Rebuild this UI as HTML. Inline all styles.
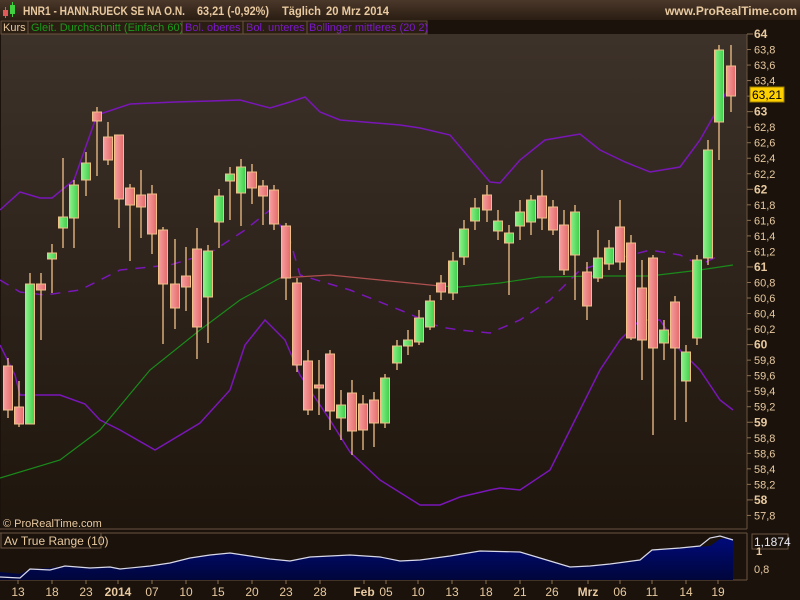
<!DOCTYPE html><html><head><meta charset="utf-8"><style>
*{margin:0;padding:0}body{width:800px;height:600px;background:#1a120b;overflow:hidden;font-family:"Liberation Sans",sans-serif;position:relative}
</style></head><body>
<svg width="800" height="600" style="position:absolute;left:0;top:0" font-family="Liberation Sans, sans-serif">
<defs>
<linearGradient id="bg" x1="0" y1="0" x2="0" y2="1"><stop offset="0" stop-color="#3d322a"/><stop offset="1" stop-color="#1e150d"/></linearGradient>
<linearGradient id="hd" x1="0" y1="0" x2="0" y2="1"><stop offset="0" stop-color="#4a382a"/><stop offset="1" stop-color="#2a1d12"/></linearGradient>
<linearGradient id="gr" x1="0" y1="0" x2="1" y2="0"><stop offset="0" stop-color="#8ff08a"/><stop offset="1" stop-color="#3ecf4a"/></linearGradient>
<linearGradient id="rd" x1="0" y1="0" x2="1" y2="0"><stop offset="0" stop-color="#f6a0a0"/><stop offset="1" stop-color="#e56a6a"/></linearGradient>
<linearGradient id="at" x1="0" y1="0" x2="0" y2="1"><stop offset="0" stop-color="#000a7a"/><stop offset="1" stop-color="#00063a"/></linearGradient>
</defs>
<rect width="800" height="20" fill="url(#hd)"/>
<rect x="0" y="20" width="800" height="580" fill="#1a120b"/>
<rect x="1" y="34" width="746" height="494" fill="url(#bg)"/>
<line x1="747" y1="34" x2="747" y2="529" stroke="#6a5440"/>
<line x1="0" y1="529" x2="747" y2="529" stroke="#6a5440"/>
<line x1="0" y1="533" x2="747" y2="533" stroke="#6a5440"/>
<line x1="747" y1="533" x2="747" y2="580" stroke="#6a5440"/>
<line x1="0" y1="580" x2="747" y2="580" stroke="#6a5440"/>
<rect x="3" y="10" width="5" height="6" fill="#e05a5a"/><line x1="5.5" y1="7" x2="5.5" y2="18" stroke="#e05a5a"/>
<rect x="10" y="5" width="5" height="9" fill="#40d040"/><line x1="12.5" y1="2" x2="12.5" y2="17" stroke="#40d040"/>
<g font-size="12" font-weight="bold" fill="#e8c9a0">
<text x="23" y="15" textLength="162" lengthAdjust="spacingAndGlyphs">HNR1 - HANN.RUECK SE NA O.N.</text>
<text x="197" y="15" textLength="72" lengthAdjust="spacingAndGlyphs">63,21 (-0,92%)</text>
<text x="282" y="15" textLength="39" lengthAdjust="spacingAndGlyphs">Täglich</text>
<text x="326" y="15" textLength="63" lengthAdjust="spacingAndGlyphs">20 Mrz 2014</text>
<text x="797" y="15" text-anchor="end">www.ProRealTime.com</text>
</g>
<g font-size="11">
<rect x="1" y="21" width="27" height="13" fill="#2a1d12" stroke="#6a5440"/><text x="3" y="31" fill="#e8c9a0">Kurs</text>
<rect x="28" y="21" width="154" height="13" fill="#2a1d12" stroke="#6a5440"/><text x="31" y="31" fill="#1a9a1a">Gleit. Durchschnitt (Einfach 60)</text>
<rect x="182" y="21" width="61" height="13" fill="#2a1d12" stroke="#6a5440"/><text x="185" y="31" fill="#7a1ac8">Bol. oberes</text>
<rect x="243" y="21" width="64" height="13" fill="#2a1d12" stroke="#6a5440"/><text x="246" y="31" fill="#7a1ac8">Bol. unteres</text>
<rect x="307" y="21" width="120" height="13" fill="#2a1d12" stroke="#6a5440"/><text x="309" y="31" fill="#7a1ac8">Bollinger mittleres (20 2)</text>
</g>
<g fill="none" stroke-width="1.5">
<polyline stroke="#7a16b8" points="0,210 20,192 40,198 52,198 74,180 97,115 130,104 175,102 211,101 240,100 270,108 290,102 305,97 320,112 340,120 400,125 420,128 450,135 490,182 500,183 520,160 545,140 580,134 600,150 625,162 650,172 680,167 700,140 720,105 733,78"/>
<polyline stroke="#7a16b8" points="0,345 15,375 20,395 40,395 60,395 85,404 100,420 120,430 155,450 200,423 230,390 245,345 265,320 285,340 300,375 330,420 350,452 380,480 420,505 440,505 460,497 490,490 500,488 520,490 550,470 570,430 600,370 620,340 640,320 660,320 680,350 700,370 710,385 720,400 733,410"/>
<polyline stroke="#7a16b8" stroke-dasharray="10,8" points="0,280 20,292 45,295 80,290 120,270 170,265 210,253 245,230 270,210 280,225 290,240 300,275 350,290 400,310 440,327 460,330 490,333 520,320 550,300 580,270 620,258 650,250 680,255 700,265 720,255"/>
<polyline stroke="#1a8a1a" stroke-width="1.2" points="0,478 60,460 100,430 150,370 200,330 240,300 280,278"/>
<polyline stroke="#b05050" stroke-width="1.2" points="280,278 330,275 380,280 420,284 440,286"/>
<polyline stroke="#1a8a1a" stroke-width="1.2" points="440,286 460,287 500,283 540,277 600,276 650,276 700,270 733,265"/>
</g>
<g id="c"></g>
<g font-size="11" fill="#e8c9a0" id="ax"></g>
<rect x="750" y="87" width="34" height="15" fill="#ffd000" stroke="#a08000"/>
<text x="752" y="99" font-size="12" fill="#000">63,21</text>
<path d="M0,572 L20,574 L30,569 L50,568 L65,566 L90,568 L110,567 L120,569 L150,566 L170,563 L190,558 L210,555 L230,553 L250,556 L270,559 L290,561 L310,557 L350,555 L380,557 L400,561 L420,560 L450,556 L480,551 L520,552 L550,561 L570,567 L590,566 L610,564 L625,562 L640,560 L652,550 L680,548 L710,546 L720,539 L731,538 L733,541 L733,580 L0,580Z" fill="url(#at)" stroke="none"/>
<polyline fill="none" stroke="#d8d8e8" stroke-width="1.2" points="0,577 20,578 30,569 50,570 65,566 90,568 110,567 120,569 150,566 170,563 190,558 210,555 230,553 250,556 270,559 290,561 310,557 350,555 380,557 400,561 420,560 450,556 480,551 520,552 550,561 570,567 590,566 610,564 625,562 640,560 652,550 680,548 700,546 710,538 720,536 733,540"/>
<rect x="1" y="533" width="100" height="15" fill="#1a120b" stroke="#6a5440"/>
<text x="4" y="545" font-size="12" fill="#e8c9a0">Av True Range (10)</text>
<text x="3" y="527" font-size="11" fill="#e8c9a0">© ProRealTime.com</text>
<rect x="752" y="534" width="36" height="15" fill="#1a120b" stroke="#6a5440"/>
<text x="754" y="546" font-size="12" fill="#e8e8f0">1,1874</text>
<text x="756" y="555" font-size="11" fill="#e8c9a0" font-weight="bold">1</text>
<text x="754" y="573" font-size="11" fill="#e8c9a0">0,8</text>
<g id="dx" font-size="12" fill="#e8c9a0" text-anchor="middle"></g>
</svg>
<script>
var c=[[8,366,410,358,418,0],[19,407,424,381,427,0],[30,284,424,273,424,1],[41,284,290,273,340,0],[52,253,259,244,293,1],[63,217,228,158,248,1],[74,185,218,180,248,1],[86,163,180,152,196,1],[97,112,121,107,176,0],[108,137,160,122,165,0],[119,135,199,135,228,0],[130,188,205,184,261,0],[141,195,207,170,238,0],[152,194,234,185,254,0],[163,230,284,227,344,0],[175,284,308,239,329,0],[186,276,287,247,311,0],[197,249,327,228,359,0],[208,251,297,245,343,1],[219,196,222,189,248,1],[230,174,181,167,220,1],[241,167,193,159,226,1],[252,172,188,164,204,0],[263,186,196,180,225,0],[274,190,224,185,230,0],[286,226,278,223,300,0],[297,283,365,278,372,0],[308,361,410,350,415,0],[319,385,388,360,415,0],[330,354,411,350,430,0],[341,405,418,390,440,1],[352,393,431,380,455,0],[363,404,430,395,450,0],[374,400,423,392,447,0],[385,378,423,374,428,1],[397,346,363,340,370,1],[408,340,346,330,355,1],[419,318,342,310,345,1],[430,301,327,295,330,1],[441,283,292,275,300,0],[453,261,293,252,300,1],[464,229,257,220,265,1],[475,208,221,198,230,1],[487,195,210,185,222,0],[498,221,231,210,240,1],[509,233,243,225,295,1],[520,212,226,200,240,1],[531,200,222,195,235,1],[542,196,218,170,230,0],[553,207,230,200,235,0],[564,225,270,210,275,0],[575,212,255,205,300,1],[587,272,306,262,320,0],[598,258,278,230,282,1],[609,248,264,240,270,1],[620,227,262,200,270,0],[631,243,338,235,340,0],[642,288,340,260,380,0],[653,258,348,255,435,0],[664,330,343,320,360,1],[675,302,348,296,420,0],[686,352,381,345,422,1],[697,260,338,255,345,1],[708,150,258,140,265,1],[719,50,122,45,160,1],[731,66,96,45,112,0]];
var s='';c.forEach(function(d){s+='<line x1="'+d[0]+'" x2="'+d[0]+'" y1="'+d[3]+'" y2="'+d[4]+'" stroke="#f0c088" stroke-width="1.3"/>';s+='<rect x="'+(d[0]-4.5)+'" y="'+d[1]+'" width="9" height="'+Math.max(2,d[2]-d[1])+'" fill="url(#'+(d[5]?'gr':'rd')+')" stroke="#f0c088"/>';});
document.getElementById('c').innerHTML=s;
var a='';for(var i=0;i<=31;i++){var p=64-i*0.2,y=34+i*15.53;var lab=(Math.round(p*10)/10).toFixed(1).replace('.',',').replace(',0','');var big=Math.abs(p-Math.round(p))<0.01;
a+='<line x1="747" x2="'+(big?753:751)+'" y1="'+y+'" y2="'+y+'" stroke="#8a7050"/>';if(y<520)a+='<text x="754" y="'+(y+4)+'" '+(big?'font-weight="bold" font-size="12"':'')+'>'+lab+'</text>';}
document.getElementById('ax').innerHTML=a;
var d=[[18,'13'],[52,'18'],[86,'23'],[118,'2014'],[152,'07'],[186,'10'],[218,'15'],[252,'20'],[286,'23'],[320,'28'],[364,'Feb'],[386,'05'],[418,'10'],[452,'13'],[486,'18'],[520,'21'],[552,'26'],[588,'Mrz'],[620,'06'],[652,'11'],[686,'14'],[718,'19']];
var t='';d.forEach(function(e){var b=isNaN(+e[1])||e[1]=='2014';t+='<line x1="'+e[0]+'" x2="'+e[0]+'" y1="580" y2="584" stroke="#8a7050"/><text x="'+e[0]+'" y="596" '+(b?'font-weight="bold"':'')+'>'+e[1]+'</text>';});
document.getElementById('dx').innerHTML=t;
</script>
</body></html>
